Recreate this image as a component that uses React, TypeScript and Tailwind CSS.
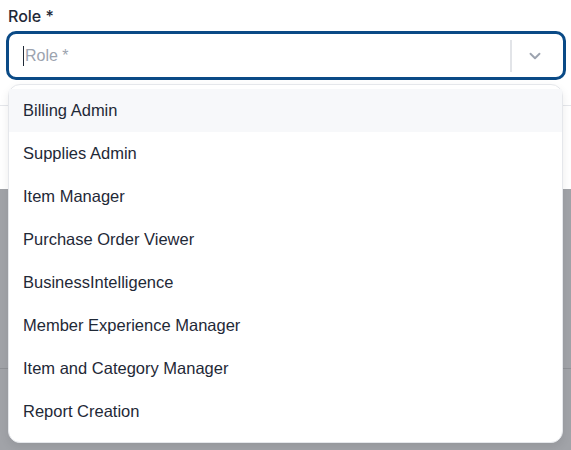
import React, { useState } from "react";
import { ChevronDown } from "lucide-react";

const roles = [
  "Billing Admin",
  "Supplies Admin",
  "Item Manager",
  "Purchase Order Viewer",
  "BusinessIntelligence",
  "Member Experience Manager",
  "Item and Category Manager",
  "Report Creation",
];

export default function App() {
  const [hovered, setHovered] = useState(0);

  return (
    <div className="relative w-[571px] h-[450px] overflow-hidden bg-white font-['Liberation_Sans',Arial,sans-serif]">
      {/* form field */}
      <div className="px-[6px] pt-[4px]">
        <label className="block pl-[2px] h-[27px] text-[16px] leading-[24px] font-medium text-[#1f2937] font-['Inter',sans-serif]">
          Role *
        </label>
        <div className="flex items-center h-[49px] w-[560px] rounded-[10px] border-[3px] border-[#0a4a86] bg-white">
          <div className="flex items-center grow pl-[14px]">
            <span className="w-px h-[20px] bg-[#1f2937]" />
            <span className="ml-[1px] text-[16px] text-[#9ca3af]">Role *</span>
          </div>
          <span className="w-[2px] h-[32px] bg-[#e2e4e8]" />
          <div className="w-[51px] pr-[5px] flex justify-center">
            <ChevronDown size={18} strokeWidth={2.5} className="text-[#9ca3af]" />
          </div>
        </div>
      </div>

      {/* page behind the menu */}
      <div className="mt-[25px] border-t border-[#e5e7eb] h-[84px]" />
      <div className="h-[180px] bg-[#a1a3a8] border-b border-[#8f9196]" />
      <div className="h-[100px] bg-[#a1a3a8]" />

      {/* dropdown menu */}
      <div className="absolute left-[8px] top-[84px] w-[555px] h-[359px] rounded-[12px] border border-[#e5e7eb] bg-white shadow-[0_4px_10px_rgba(0,0,0,0.08)] pt-[4px]">
        {roles.map((r, i) => (
          <div
            key={r}
            onMouseEnter={() => setHovered(i)}
            className={
              "h-[43px] flex items-center pl-[14px] text-[16.5px] text-[#1f2937] cursor-pointer " +
              (hovered === i ? "bg-[#f7f8fa]" : "")
            }
          >
            {r}
          </div>
        ))}
      </div>
    </div>
  );
}
